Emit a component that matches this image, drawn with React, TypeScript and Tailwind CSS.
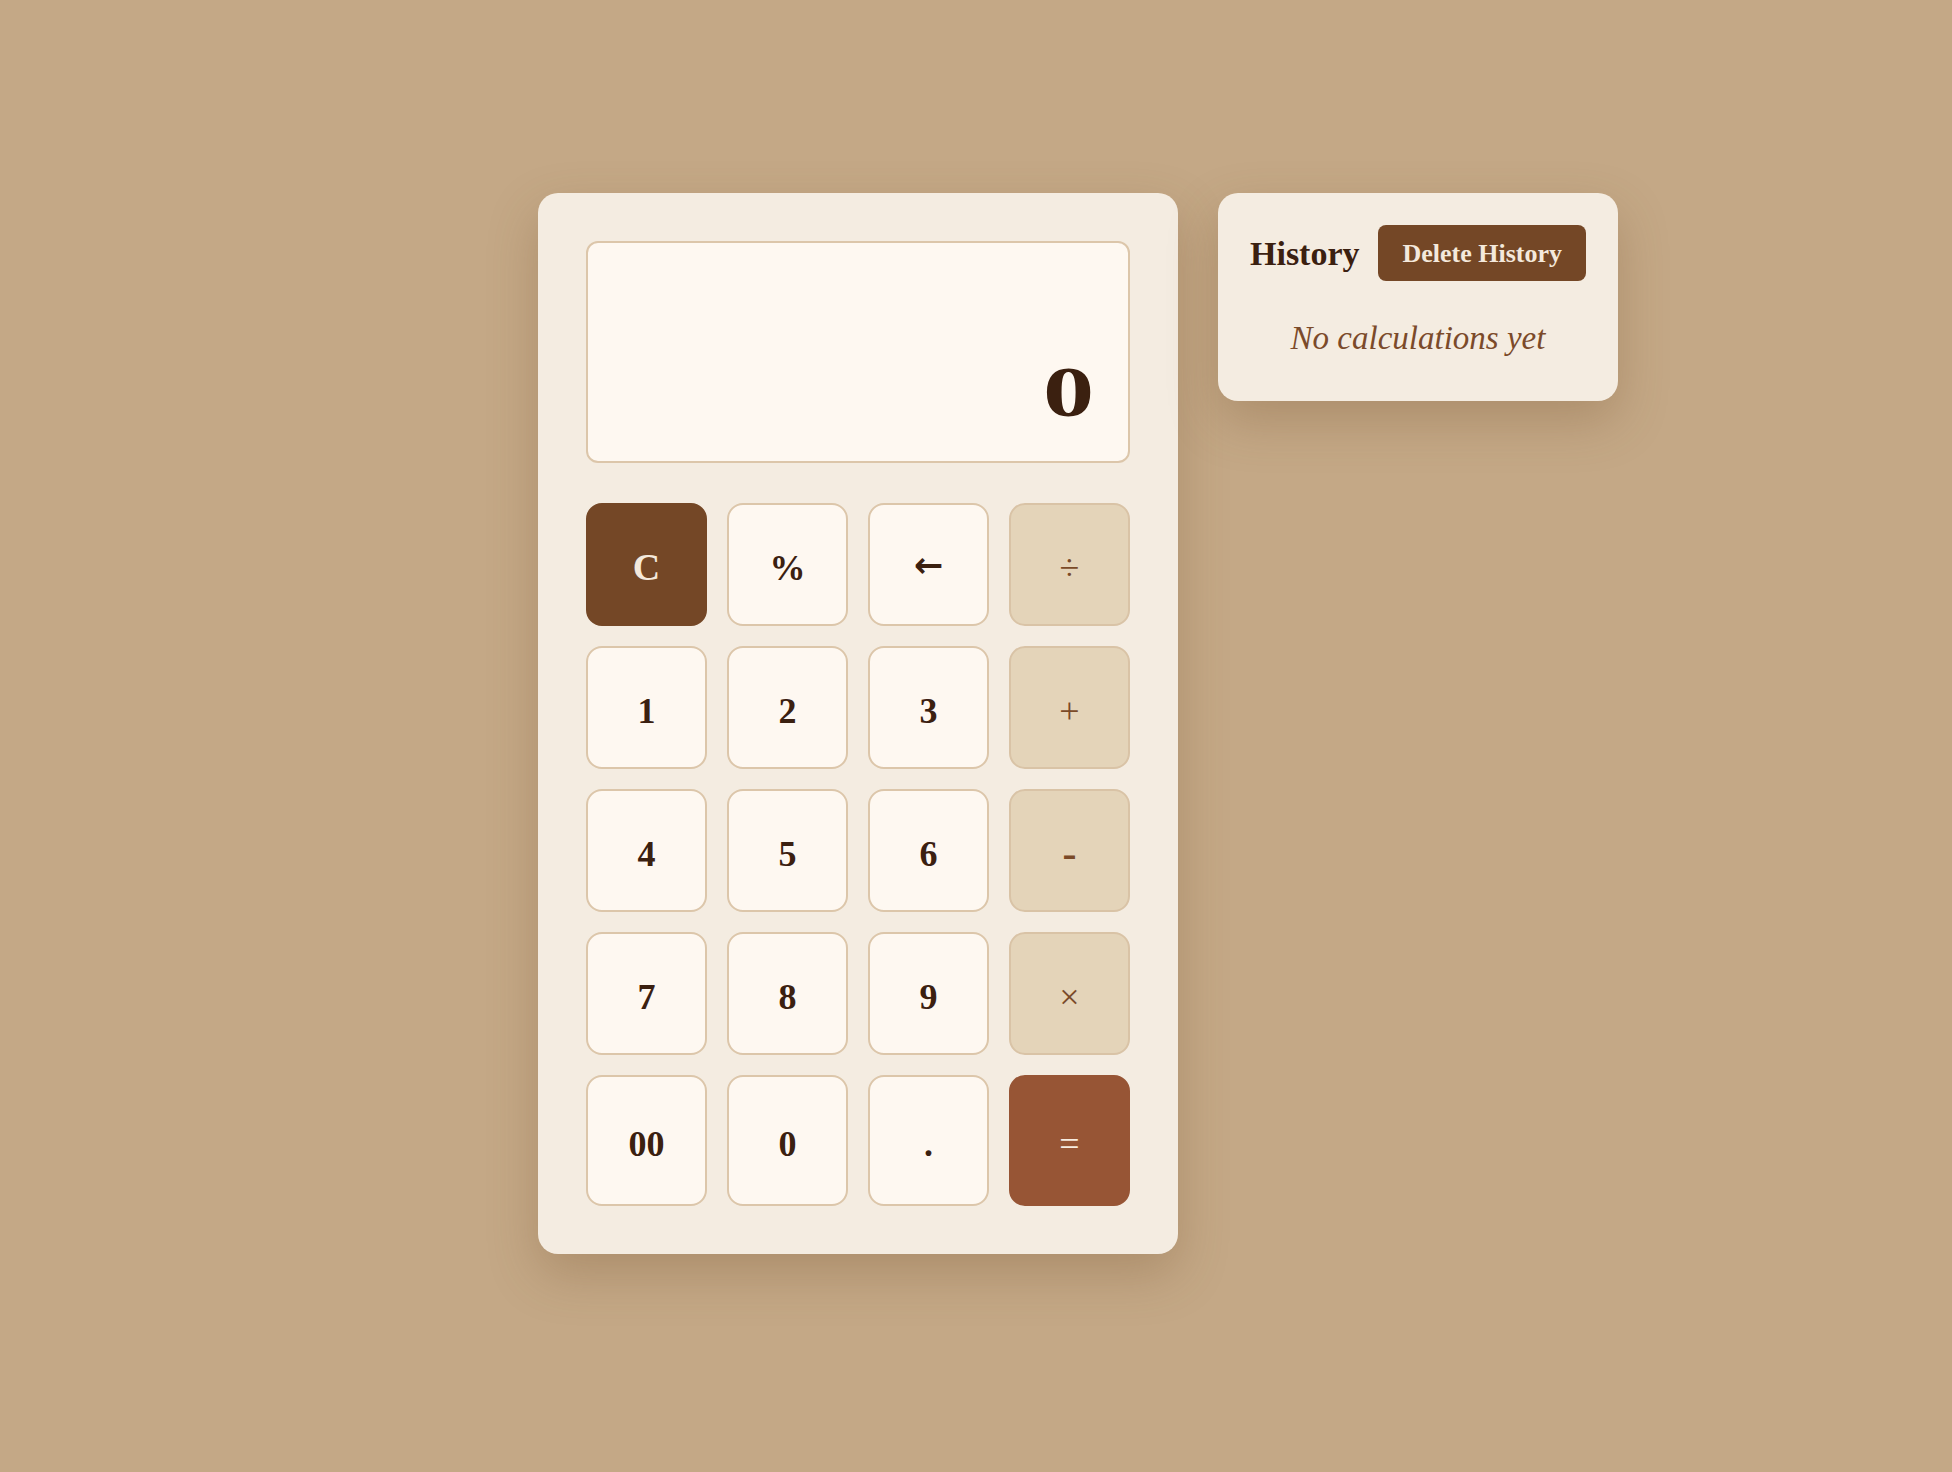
import React from "react";

type Kind = "num" | "op" | "clear" | "eq";

const keys: { label: string; kind: Kind; extra?: string }[] = [
  { label: "C", kind: "clear", extra: "font-bold text-[38px]" },
  { label: "%", kind: "num", extra: "font-bold text-[36px]" },
  {
    label: "←",
    kind: "num",
    extra: "font-bold text-[35px] pb-1 font-['DejaVu_Sans',sans-serif]",
  },
  { label: "÷", kind: "op", extra: "font-normal text-[36px]" },
  { label: "1", kind: "num", extra: "font-bold text-[36px]" },
  { label: "2", kind: "num", extra: "font-bold text-[36px]" },
  { label: "3", kind: "num", extra: "font-bold text-[36px]" },
  { label: "+", kind: "op", extra: "font-normal text-[36px]" },
  { label: "4", kind: "num", extra: "font-bold text-[36px]" },
  { label: "5", kind: "num", extra: "font-bold text-[36px]" },
  { label: "6", kind: "num", extra: "font-bold text-[36px]" },
  { label: "-", kind: "op", extra: "font-bold text-[42px]" },
  { label: "7", kind: "num", extra: "font-bold text-[36px]" },
  { label: "8", kind: "num", extra: "font-bold text-[36px]" },
  { label: "9", kind: "num", extra: "font-bold text-[36px]" },
  { label: "×", kind: "op", extra: "font-normal text-[36px]" },
  { label: "00", kind: "num", extra: "font-bold text-[36px]" },
  { label: "0", kind: "num", extra: "font-bold text-[36px]" },
  { label: ".", kind: "num", extra: "font-bold text-[36px]" },
  { label: "=", kind: "eq", extra: "font-normal text-[36px]" },
];

function keyClass(kind: Kind) {
  switch (kind) {
    case "clear":
      return "bg-[#744726] text-[#f4e9dc] border-2 border-[#744726]";
    case "eq":
      return "bg-[#975535] text-[#f7ece0] border-2 border-[#975535]";
    case "op":
      return "bg-[#e4d4b9] text-[#7a4a28] border-2 border-[#d9c3a6]";
    default:
      return "bg-[#fef8f1] text-[#3b2010] border-2 border-[#dcc6aa]";
  }
}

export default function App() {
  return (
    <div
      className="min-h-screen w-full bg-[#c4a886]"
      style={{ fontFamily: '"Liberation Serif", "Times New Roman", serif' }}
    >
      <div className="flex items-start gap-10 pl-[538px] pt-[193px]">
        {/* Calculator */}
        <div className="w-[640px] rounded-[20px] bg-[#f4ece1] p-12 shadow-[0_20px_50px_rgba(110,75,40,0.28)]">
          <div className="mb-10 flex h-[222px] items-end justify-end rounded-xl border-2 border-[#dcc6aa] bg-[#fef8f1] pb-[33px] pr-[34px]">
            <span className="inline-block origin-right scale-x-[1.42] text-[72px] font-bold leading-none text-[#3b2010]">
              0
            </span>
          </div>
          <div className="grid grid-cols-4 gap-x-5 gap-y-5">
            {keys.map((k, i) => (
              <button
                key={i}
                className={`flex items-center justify-center rounded-2xl pt-1.5 ${
                  i >= 16 ? "h-[131px]" : "h-[123px]"
                } ${keyClass(k.kind)} ${k.extra ?? ""}`}
              >
                {k.label}
              </button>
            ))}
          </div>
        </div>

        {/* History */}
        <div className="w-[400px] rounded-[20px] bg-[#f4ece1] px-8 pb-[39px] pt-8 shadow-[0_20px_50px_rgba(110,75,40,0.28)]">
          <div className="flex items-center justify-between">
            <h2 className="text-[34px] font-bold text-[#3b2010]">History</h2>
            <button className="h-14 rounded-lg bg-[#744726] px-6 text-[26px] font-bold text-[#f4e9dc]">
              Delete History
            </button>
          </div>
          <p className="mt-[33px] text-center text-[33px] italic leading-[48px] text-[#7b4a2a]">
            No calculations yet
          </p>
        </div>
      </div>
    </div>
  );
}
